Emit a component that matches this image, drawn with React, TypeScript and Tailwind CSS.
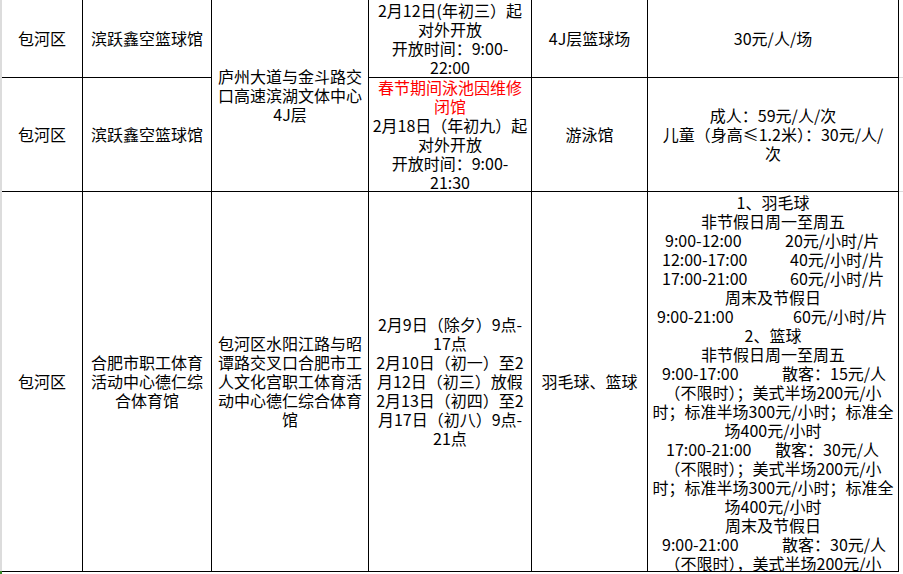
import React from "react";

const L = ({ children, className = "" }: { children: React.ReactNode; className?: string }) => (
  <div className={"whitespace-nowrap text-center " + className}>{children}</div>
);

const P = ({ t, p, tw, pl }: { t: string; p: string; tw: number; pl: number }) => (
  <div className="flex whitespace-nowrap">
    <span className="shrink-0" style={{ paddingLeft: pl, width: tw }}>{t}</span>
    <span className="shrink-0">{p}</span>
  </div>
);

const cell = "flex flex-col items-center justify-center border-r border-b border-black overflow-hidden";

export default function App() {
  return (
    <div className="w-[903px] h-[574px] bg-white overflow-hidden flex text-black text-[16px] leading-[19px] font-['Noto_Sans_CJK_SC','Noto_Sans',sans-serif]">
      <div className="w-[2px] flex flex-col shrink-0">
        <div className="h-[571px] bg-[#dcdcdc]" />
        <div className="h-[3px] bg-[#3a8a2a]" />
      </div>
      <div className="grid grid-cols-[81px_129px_157px_163px_116px_251px] grid-rows-[78px_114px_380px] shrink-0 h-[572px]">
        {/* row 1 */}
        <div className={cell}>包河区</div>
        <div className={cell}>滨跃鑫空篮球馆</div>
        <div className={cell + " row-span-2"}>
          <L>庐州大道与金斗路交</L>
          <L>口高速滨湖文体中心</L>
          <L>4J层</L>
        </div>
        <div className={cell}>
          <L>2月12日(年初三）起</L>
          <L>对外开放</L>
          <L>开放时间：9:00-</L>
          <L>22:00</L>
        </div>
        <div className={cell}>4J层篮球场</div>
        <div className={cell}>30元/人/场</div>

        {/* row 2 */}
        <div className={cell}>包河区</div>
        <div className={cell}>滨跃鑫空篮球馆</div>
        <div className={cell}>
          <L className="text-[#ff0000]">春节期间泳池因维修</L>
          <L className="text-[#ff0000]">闭馆</L>
          <L>2月18日（年初九）起</L>
          <L>对外开放</L>
          <L>开放时间：9:00-</L>
          <L>21:30</L>
        </div>
        <div className={cell}>游泳馆</div>
        <div className={cell}>
          <L>成人：59元/人/次</L>
          <L>儿童（身高≤1.2米）：30元/人/</L>
          <L>次</L>
        </div>

        {/* row 3 */}
        <div className={cell}>包河区</div>
        <div className={cell}>
          <L>合肥市职工体育</L>
          <L>活动中心德仁综</L>
          <L>合体育馆</L>
        </div>
        <div className={cell}>
          <L>包河区水阳江路与昭</L>
          <L>谭路交叉口合肥市工</L>
          <L>人文化宫职工体育活</L>
          <L>动中心德仁综合体育</L>
          <L>馆</L>
        </div>
        <div className={cell}>
          <L>2月9日（除夕）9点-</L>
          <L>17点</L>
          <L>2月10日（初一）至2</L>
          <L>月12日（初三）放假</L>
          <L>2月13日（初四）至2</L>
          <L>月17日（初八）9点-</L>
          <L>21点</L>
        </div>
        <div className={cell}>羽毛球、篮球</div>
        <div className="flex flex-col items-stretch justify-start pt-[1px] border-r border-b border-black overflow-hidden">
          <L>1、羽毛球</L>
          <L>非节假日周一至周五</L>
          <P t="9:00-12:00" p="20元/小时/片" pl={17} tw={137} />
          <P t="12:00-17:00" p="40元/小时/片" pl={14} tw={142} />
          <P t="17:00-21:00" p="60元/小时/片" pl={14} tw={142} />
          <L>周末及节假日</L>
          <P t="9:00-21:00" p="60元/小时/片" pl={9} tw={145} />
          <L>2、篮球</L>
          <L>非节假日周一至周五</L>
          <P t="9:00-17:00" p="散客：15元/人" pl={14} tw={134} />
          <L>（不限时）；美式半场200元/小</L>
          <L>时；标准半场300元/小时；标准全</L>
          <L>场400元/小时</L>
          <P t="17:00-21:00" p="散客：30元/人" pl={18} tw={127} />
          <L>（不限时）；美式半场200元/小</L>
          <L>时；标准半场300元/小时；标准全</L>
          <L>场400元/小时</L>
          <L>周末及节假日</L>
          <P t="9:00-21:00" p="散客：30元/人" pl={14} tw={134} />
          <L>（不限时），美式半场200元/小</L>
          <L>时；标准半场300元/小时；标准全</L>
          <L>场400元/小时</L>
        </div>
      </div>
      <div className="flex-1 flex flex-col">
        <div className="h-[78px] border-b border-[#d9d9d9]" />
        <div className="h-[114px] border-b border-[#d9d9d9]" />
      </div>
    </div>
  );
}
